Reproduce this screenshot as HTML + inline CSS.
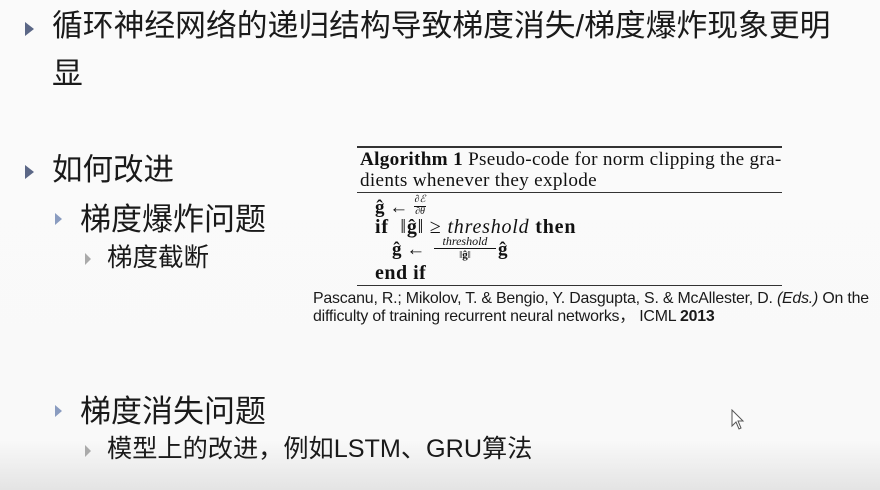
<!DOCTYPE html><html><head><meta charset="utf-8"><style>
body{margin:0;width:880px;height:490px;overflow:hidden;background:linear-gradient(#fafafa 0,#f9f9f9 440px,#e4e4e4 490px);font-family:"Liberation Sans","Noto Sans CJK SC",sans-serif;color:#1a1a1a;position:relative}
.t{position:absolute;white-space:nowrap;line-height:1}
.b{position:absolute;width:0;height:0;border-style:solid;border-color:transparent}
.s{font-family:"Liberation Serif",serif;color:#111}
.r{position:absolute;left:357px;width:425px;background:#333}
.f{position:absolute;font-family:"Liberation Serif",serif;font-style:italic;text-align:center;line-height:1;color:#111}
</style></head><body>
<div class="b" style="left:25px;top:22px;border-width:7px 0 7px 9px;border-left-color:#5b6786"></div>
<div class="t" style="left:52px;top:11px;font-size:30.8px">循环神经网络的递归结构导致梯度消失/梯度爆炸现象更明</div>
<div class="t" style="left:52px;top:59px;font-size:30.8px">显</div>
<div class="b" style="left:25px;top:165px;border-width:7px 0 7px 9px;border-left-color:#5b6786"></div>
<div class="t" style="left:52px;top:155px;font-size:30.5px">如何改进</div>
<div class="b" style="left:55px;top:213px;border-width:6px 0 6px 7px;border-left-color:#8a9cc0"></div>
<div class="t" style="left:80px;top:204px;font-size:31px">梯度爆炸问题</div>
<div class="b" style="left:85px;top:253px;border-width:6px 0 6px 6px;border-left-color:#aaa"></div>
<div class="t" style="left:107px;top:246px;font-size:25.5px">梯度截断</div>
<div class="b" style="left:55px;top:405px;border-width:6px 0 6px 7px;border-left-color:#8a9cc0"></div>
<div class="t" style="left:80px;top:396px;font-size:31px">梯度消失问题</div>
<div class="b" style="left:85px;top:445px;border-width:6px 0 6px 6px;border-left-color:#aaa"></div>
<div class="t" style="left:107px;top:437px;font-size:25.2px">模型上的改进，例如LSTM、GRU算法</div>

<div class="r" style="top:146px;height:2px"></div>
<div class="t s" style="left:360px;top:150px;font-size:19.2px;letter-spacing:0.3px"><b>Algorithm 1</b> Pseudo-code for norm clipping the gra-</div>
<div class="t s" style="left:360px;top:171px;font-size:19.2px;letter-spacing:0.3px">dients whenever they explode</div>
<div class="r" style="top:192px;height:1px"></div>
<div class="t s" style="left:375px;top:198px;font-size:19px"><b>ĝ</b> ←</div>
<div class="f" style="left:413px;top:195px;font-size:10px;width:14px">∂ℰ</div>
<div style="position:absolute;left:414px;top:206px;width:12px;height:1px;background:#111"></div>
<div class="f" style="left:413px;top:207px;font-size:10px;width:14px">∂θ</div>
<div class="t s" style="left:375px;top:217px;font-size:20px;letter-spacing:0.8px"><b>if</b> &nbsp;‖<b>ĝ</b>‖ ≥ <i>threshold</i> <b>then</b></div>
<div class="t s" style="left:392px;top:240px;font-size:19px"><b>ĝ</b> ←</div>
<div class="f" style="left:433px;top:235px;font-size:12px;width:64px">threshold</div>
<div style="position:absolute;left:434px;top:248px;width:62px;height:1px;background:#111"></div>
<div class="f" style="left:433px;top:250px;font-size:11px;width:64px;font-style:normal">‖<b>ĝ</b>‖</div>
<div class="t s" style="left:498px;top:240px;font-size:19px"><b>ĝ</b></div>
<div class="t s" style="left:375px;top:263px;font-size:20px;letter-spacing:0.5px"><b>end if</b></div>
<div class="r" style="top:285px;height:1px"></div>
<div class="t" style="left:313px;top:291px;font-size:15.9px;letter-spacing:-0.2px">Pascanu, R.; Mikolov, T. &amp; Bengio, Y. Dasgupta, S. &amp; McAllester, D. <i>(Eds.)</i> On the</div>
<div class="t" style="left:313px;top:309px;font-size:15.9px;letter-spacing:-0.2px">difficulty of training recurrent neural networks， ICML <b>2013</b></div>
<svg style="position:absolute;left:731px;top:409px" width="14" height="22"><path d="M1 1 L1 17 L5 13 L8 20 L10 19 L7 12 L12 12 Z" fill="#fff" stroke="#555" stroke-width="1"/></svg>
</body></html>
